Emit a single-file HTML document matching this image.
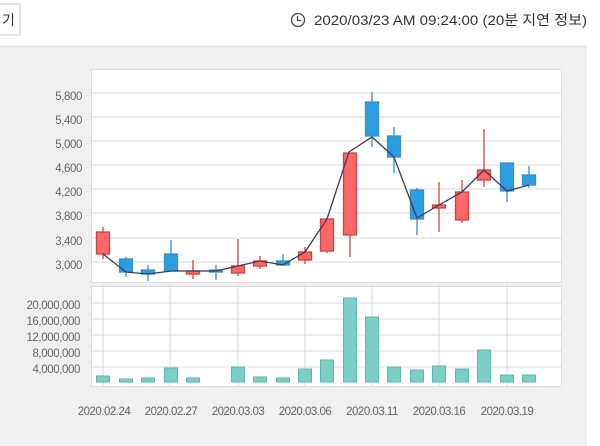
<!DOCTYPE html>
<html><head><meta charset="utf-8"><style>
body{margin:0;width:600px;height:446px;background:#fff;overflow:hidden;font-family:"Liberation Sans","Noto Sans CJK KR",sans-serif;}
</style></head><body>
<svg width="600" height="446" xmlns="http://www.w3.org/2000/svg" style="position:absolute;left:0;top:0">
<rect x="-1" y="4" width="21" height="31" fill="#fff" stroke="#ccc"/>
<text x="2" y="25" font-size="14" fill="#333" font-family="Noto Sans CJK KR, sans-serif">기</text>
<circle cx="298" cy="20" r="6.5" fill="none" stroke="#444" stroke-width="1.3"/>
<path d="M297.5 16V20.5H301" fill="none" stroke="#444" stroke-width="1.3"/>
<text x="314" y="25" font-size="14" fill="#333" textLength="273" lengthAdjust="spacingAndGlyphs">2020/03/23 AM 09:24:00 (20분 지연 정보)</text>
<rect x="0" y="46" width="587" height="400" fill="#f0f0f0"/>
<rect x="0" y="45.5" width="587" height="1" fill="#e4e4e4"/>
<rect x="91.5" y="69.5" width="470" height="213" fill="#fff" stroke="#ddd"/>
<rect x="91.5" y="286.5" width="470" height="100" fill="#fff" stroke="#ddd"/>
<g stroke="#e2e2e2" stroke-width="1.2">
<path d="M92 93H561M92 117H561M92 141H561M92 165H561M92 189H561M92 213H561M92 238H561M92 262H561"/>
<path d="M92 303H561M92 319H561M92 335H561M92 351H561M92 367H561"/>
<path d="M103 287V386M170 287V386M238 287V386M305 287V386M372 287V386M439 287V386M507 287V386"/>
<path d="M103 282V287M170 282V287M238 282V287M305 282V287M372 282V287M439 282V287M507 282V287"/>
</g>
<g font-size="11.5" fill="#666" text-anchor="end" letter-spacing="-0.4">
<text x="82" y="100">5,800</text><text x="82" y="124">5,400</text><text x="82" y="148">5,000</text><text x="82" y="172">4,600</text><text x="82" y="196">4,200</text><text x="82" y="220">3,800</text><text x="82" y="245">3,400</text><text x="82" y="269">3,000</text>
<text x="80" y="309">20,000,000</text><text x="80" y="325">16,000,000</text><text x="80" y="341">12,000,000</text><text x="80" y="357">8,000,000</text><text x="80" y="373">4,000,000</text>
</g>
<g font-size="11.5" fill="#666" text-anchor="middle" letter-spacing="-0.5">
<text x="104" y="415">2020.02.24</text><text x="171" y="415">2020.02.27</text><text x="238" y="415">2020.03.03</text><text x="305" y="415">2020.03.06</text><text x="372" y="415">2020.03.11</text><text x="439" y="415">2020.03.16</text><text x="507" y="415">2020.03.19</text>
</g>
<g stroke-width="1.3">
<g stroke="#c94545" fill="#f66">
<path d="M103 227V259M193 260V279M238 239V276M260 256V269M305 247V264M327 219V253M350 153V257M439 182V232M462 180V223M484 129V187" fill="none"/>
<rect x="96.5" y="232" width="13" height="22"/>
<rect x="186.5" y="271" width="13" height="3"/>
<rect x="231.5" y="266" width="13" height="7"/>
<rect x="253.5" y="261" width="13" height="5"/>
<rect x="298.5" y="252" width="13" height="8"/>
<rect x="320.5" y="219" width="13" height="32"/>
<rect x="343.5" y="153" width="13" height="82"/>
<rect x="432.5" y="205" width="13" height="3"/>
<rect x="455.5" y="192" width="13" height="28"/>
<rect x="477.5" y="170" width="13" height="10"/>
</g>
<g stroke="#3a8fc8" fill="#2a9ee0">
<path d="M126 257V277M148 265V281M171 240V271M216 265V280M283 254V265M372 92V147M394 127V173M417 188V235M507 162V202M529 166V188" fill="none"/>
<rect x="119.5" y="259" width="13" height="13"/>
<rect x="141.5" y="270" width="13" height="4"/>
<rect x="164.5" y="254" width="13" height="17"/>
<rect x="209.5" y="270" width="13" height="2"/>
<rect x="276.5" y="261" width="13" height="4"/>
<rect x="365.5" y="102" width="13" height="34"/>
<rect x="387.5" y="136" width="13" height="21"/>
<rect x="410.5" y="190" width="13" height="29"/>
<rect x="500.5" y="163" width="13" height="28"/>
<rect x="522.5" y="175" width="13" height="10"/>
</g>
</g>
<polyline fill="none" stroke="#3c3c5c" stroke-width="1.3" points="103,254 126,272 148,274 171,271 193,271 216,271 238,266 260,261 283,265 305,252 327,219 349,152 372,137 394,157 417,218 439,205 462,192 484,170 507,191 529,185"/>
<g fill="#7ccfc4" stroke="#5fb5aa">
<rect x="96.5" y="376" width="13" height="6"/><rect x="119.5" y="379" width="13" height="3"/><rect x="141.5" y="378" width="13" height="4"/><rect x="164.5" y="368" width="13" height="14"/><rect x="186.5" y="378" width="13" height="4"/><rect x="231.5" y="367" width="13" height="15"/><rect x="253.5" y="377" width="13" height="5"/><rect x="276.5" y="378" width="13" height="4"/><rect x="298.5" y="369" width="13" height="13"/><rect x="320.5" y="360" width="13" height="22"/><rect x="343.5" y="298" width="13" height="84"/><rect x="365.5" y="317" width="13" height="65"/><rect x="387.5" y="367" width="13" height="15"/><rect x="410.5" y="370" width="13" height="12"/><rect x="432.5" y="366" width="13" height="16"/><rect x="455.5" y="369" width="13" height="13"/><rect x="477.5" y="350" width="13" height="32"/><rect x="500.5" y="375" width="13" height="7"/><rect x="522.5" y="375" width="13" height="7"/>
</g>
</svg>
</body></html>
